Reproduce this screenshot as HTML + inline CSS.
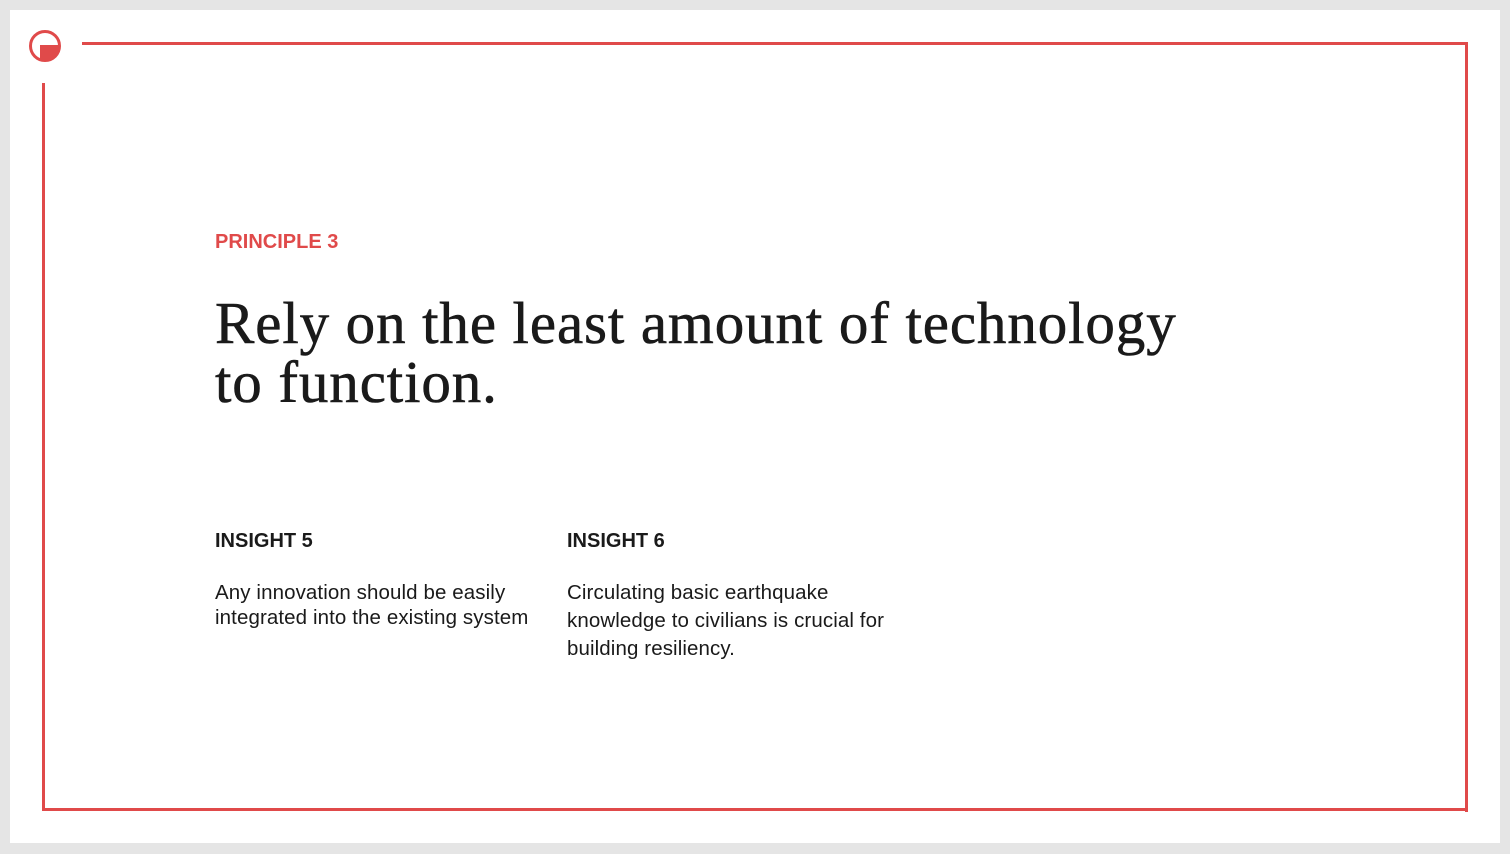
<!DOCTYPE html>
<html><head><meta charset="utf-8"><style>
html,body{margin:0;padding:0}
body{width:1510px;height:854px;background:#e5e5e5;position:relative;overflow:hidden;font-family:"Liberation Sans",sans-serif;color:#1a1a1a}
.page{position:absolute;left:10px;top:10px;width:1490px;height:833px;background:#fff}
.l{position:absolute;background:#e04a4a}
.t{position:absolute;white-space:nowrap}
</style></head><body>
<div class="page"></div>
<div class="l" style="left:82px;top:42px;width:1386px;height:3px"></div>
<div class="l" style="left:1465px;top:42px;width:3px;height:770px"></div>
<div class="l" style="left:42px;top:808px;width:1426px;height:3px"></div>
<div class="l" style="left:42px;top:83px;width:3px;height:728px"></div>
<svg style="position:absolute;left:28px;top:29px" width="36" height="36" viewBox="28 29 36 36">
<defs><clipPath id="c"><circle cx="45" cy="46" r="15"/></clipPath></defs>
<circle cx="45" cy="46" r="14.5" fill="none" stroke="#e04a4a" stroke-width="3"/>
<rect x="40" y="45" width="30" height="30" fill="#e04a4a" clip-path="url(#c)"/>
</svg>
<div class="t" style="left:215px;top:231px;font-size:20px;font-weight:bold;color:#e04a4a">PRINCIPLE 3</div>
<div class="t" style="left:215px;top:294px;font-family:'Liberation Serif',serif;font-size:59px;line-height:59px;letter-spacing:0.9px;-webkit-text-stroke:0.6px #1a1a1a;color:#1a1a1a">Rely on the least amount of technology<br>to function.</div>
<div class="t" style="left:215px;top:530px;font-size:20px;font-weight:bold">INSIGHT 5</div>
<div class="t" style="left:567px;top:530px;font-size:20px;font-weight:bold">INSIGHT 6</div>
<div class="t" style="left:215px;top:580px;font-size:20.5px;letter-spacing:0.1px;line-height:25px">Any innovation should be easily<br>integrated into the existing system</div>
<div class="t" style="left:567px;top:579px;font-size:20.5px;letter-spacing:0.1px;line-height:28px">Circulating basic earthquake<br>knowledge to civilians is crucial for<br>building resiliency.</div>
</body></html>
